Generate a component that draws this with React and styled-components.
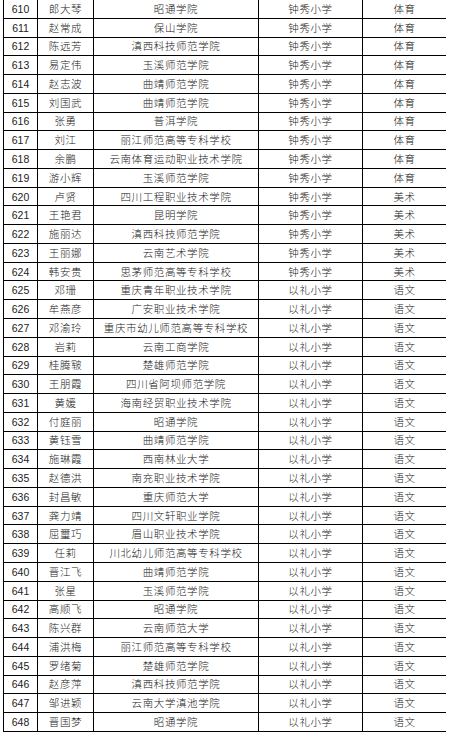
import React from 'react';
import styled, { createGlobalStyle } from 'styled-components';

const GlobalStyle = createGlobalStyle`
  html, body {
    margin: 0;
    padding: 0;
    background: #fff;
  }
  body {
    font-family: "Liberation Sans", "Noto Sans CJK SC", sans-serif;
  }
`;

const Page = styled.div`
  padding-left: 3px;
  width: 443px;
  overflow: hidden;
`;

const Table = styled.table`
  width: 443px;
  margin-top: -1px;
  border-collapse: collapse;
  table-layout: fixed;
  color: #222;
  font-size: 10.5px;
`;

const Col = styled.col`
  width: ${(p) => p.$w}px;
`;

const Row = styled.tr`
  height: 18.77px;
`;

const Cell = styled.td`
  border: 1px solid #000;
  padding: 0;
  text-align: center;
  vertical-align: middle;
  white-space: nowrap;
  line-height: 12px;
  font-weight: 300;
  letter-spacing: ${(p) => (p.$num ? '0' : '0.6px')};
`;

const widths = [34, 56, 165, 104, 84];

const rows = [
  [610, '郎大琴', '昭通学院', '钟秀小学', '体育'],
  [611, '赵常成', '保山学院', '钟秀小学', '体育'],
  [612, '陈远芳', '滇西科技师范学院', '钟秀小学', '体育'],
  [613, '易定伟', '玉溪师范学院', '钟秀小学', '体育'],
  [614, '赵志波', '曲靖师范学院', '钟秀小学', '体育'],
  [615, '刘国武', '曲靖师范学院', '钟秀小学', '体育'],
  [616, '张勇', '普洱学院', '钟秀小学', '体育'],
  [617, '刘江', '丽江师范高等专科学校', '钟秀小学', '体育'],
  [618, '余鹏', '云南体育运动职业技术学院', '钟秀小学', '体育'],
  [619, '游小辉', '玉溪师范学院', '钟秀小学', '体育'],
  [620, '卢贤', '四川工程职业技术学院', '钟秀小学', '美术'],
  [621, '王艳君', '昆明学院', '钟秀小学', '美术'],
  [622, '施丽达', '滇西科技师范学院', '钟秀小学', '美术'],
  [623, '王丽娜', '云南艺术学院', '钟秀小学', '美术'],
  [624, '韩安贵', '思茅师范高等专科学校', '钟秀小学', '美术'],
  [625, '邓珊', '重庆青年职业技术学院', '以礼小学', '语文'],
  [626, '牟燕彦', '广安职业技术学院', '以礼小学', '语文'],
  [627, '邓渝玲', '重庆市幼儿师范高等专科学校', '以礼小学', '语文'],
  [628, '岩莉', '云南工商学院', '以礼小学', '语文'],
  [629, '桂腾皲', '楚雄师范学院', '以礼小学', '语文'],
  [630, '王朋霞', '四川省阿坝师范学院', '以礼小学', '语文'],
  [631, '黄媛', '海南经贸职业技术学院', '以礼小学', '语文'],
  [632, '付庭丽', '昭通学院', '以礼小学', '语文'],
  [633, '黄钰雪', '曲靖师范学院', '以礼小学', '语文'],
  [634, '施琳霞', '西南林业大学', '以礼小学', '语文'],
  [635, '赵德洪', '南充职业技术学院', '以礼小学', '语文'],
  [636, '封昌敏', '重庆师范大学', '以礼小学', '语文'],
  [637, '龚力靖', '四川文轩职业学院', '以礼小学', '语文'],
  [638, '屈璽巧', '眉山职业技术学院', '以礼小学', '语文'],
  [639, '任莉', '川北幼儿师范高等专科学校', '以礼小学', '语文'],
  [640, '晋江飞', '曲靖师范学院', '以礼小学', '语文'],
  [641, '张星', '玉溪师范学院', '以礼小学', '语文'],
  [642, '高顺飞', '昭通学院', '以礼小学', '语文'],
  [643, '陈兴群', '云南师范大学', '以礼小学', '语文'],
  [644, '浦洪梅', '丽江师范高等专科学校', '以礼小学', '语文'],
  [645, '罗绪菊', '楚雄师范学院', '以礼小学', '语文'],
  [646, '赵彦萍', '滇西科技师范学院', '以礼小学', '语文'],
  [647, '邹进颖', '云南大学滇池学院', '以礼小学', '语文'],
  [648, '晋国梦', '昭通学院', '以礼小学', '语文'],
];

function App() {
  return (
    <Page>
      <GlobalStyle />
      <Table>
        <colgroup>
          {widths.map((w, i) => (
            <Col key={i} $w={w} />
          ))}
        </colgroup>
        <tbody>
          {rows.map((r) => (
            <Row key={r[0]}>
              <Cell $num>{r[0]}</Cell>
              <Cell>{r[1]}</Cell>
              <Cell>{r[2]}</Cell>
              <Cell>{r[3]}</Cell>
              <Cell>{r[4]}</Cell>
            </Row>
          ))}
        </tbody>
      </Table>
    </Page>
  );
}

export default App;
